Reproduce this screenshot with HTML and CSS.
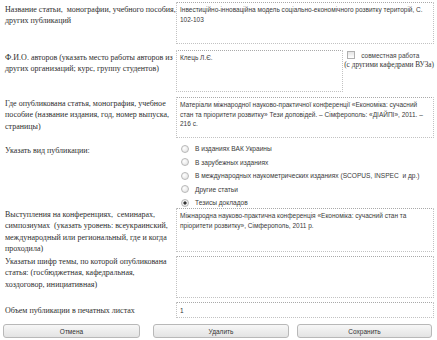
FILE: index.html
```html
<!DOCTYPE html>
<html lang="ru">
<head>
<meta charset="utf-8">
<title>Публикация</title>
<link rel="stylesheet" href="styles.css">
</head>
<body>
<form class="form">
  <div class="row r1">
    <div class="label">Название статьи,&nbsp; монографии, учебного пособия, других публикаций</div>
    <div class="control"><textarea class="ta h42">Інвестиційно-інноваційна модель соціально-економічного розвитку територій, С. 102-103</textarea></div>
  </div>
  <div class="row r2">
    <div class="label">Ф.И.О. авторов (указать место работы авторов из других организаций; курс, группу студентов)</div>
    <div class="control split">
      <textarea class="ta narrow h42">Клець Л.Є.</textarea>
      <div class="joint">
        <label class="joint-top"><input type="checkbox" class="cb"><span class="joint-text">совместная работа</span></label>
        <div class="joint-note">(с другими кафедрами ВУЗа)</div>
      </div>
    </div>
  </div>
  <div class="row r3">
    <div class="label">Где опубликована статья, монография, учебное пособие (название издания, год, номер выпуска, страницы)</div>
    <div class="control"><textarea class="ta h41">Матеріали міжнародної науково-практичної конференції «Економіка: сучасний стан та пріоритети розвитку» Тези доповідей. – Сімферополь: «ДІАЙПІ», 2011. – 216 с.</textarea></div>
  </div>
  <div class="row r4">
    <div class="label">Указать вид публикации:</div>
    <div class="control radios">
      <label class="opt"><input type="radio" name="kind" class="rb"><span>В изданиях ВАК Украины</span></label>
      <label class="opt"><input type="radio" name="kind" class="rb"><span>В зарубежных изданиях</span></label>
      <label class="opt"><input type="radio" name="kind" class="rb"><span>В международных наукометрических изданиях (SCOPUS, INSPEC&nbsp; и др.)</span></label>
      <label class="opt"><input type="radio" name="kind" class="rb"><span>Другие статьи</span></label>
      <label class="opt"><input type="radio" name="kind" class="rb" checked><span>Тезисы докладов</span></label>
    </div>
  </div>
  <div class="row r5">
    <div class="label">Выступления на конференциях,&nbsp; семинарах, симпозиумах&nbsp; (указать уровень: всеукраинский, международный или региональный, где и когда проходила)</div>
    <div class="control"><textarea class="ta h44">Міжнародна науково-практична конференція «Економіка: сучасний стан та пріоритети розвитку», Сімферополь, 2011 р.</textarea></div>
  </div>
  <div class="row r6">
    <div class="label">Указатьи шифр темы, по которой опубликована статья: (госбюджетная, кафедральная, хоздоговор, инициативная)</div>
    <div class="control"><textarea class="ta h42"></textarea></div>
  </div>
  <div class="row r7">
    <div class="label mid">Объем публикации в печатных листах</div>
    <div class="control"><input type="text" class="inp" value="1"></div>
  </div>
  <div class="buttons">
    <button type="button" class="btn b-cancel">Отмена</button>
    <button type="button" class="btn b-del">Удалить</button>
    <button type="button" class="btn b-save">Сохранить</button>
  </div>
</form>
</body>
</html>
```

FILE: styles.css
```css
html, body {
  margin: 0;
  padding: 0;
  background: #ffffff;
}
body {
  font-family: "Liberation Serif", "Times New Roman", serif;
  font-size: 8px;
  color: #222;
}
.form {
  width: 437px;
  padding: 2px 0 0 5px;
  box-sizing: border-box;
}
.row {
  display: grid;
  grid-template-columns: 171px 258px;
  align-items: start;
}
.label {
  padding-top: 2px;
  margin-bottom: -12px;
  line-height: 11.4px;
  color: #2e2e2e;
}
.r3 .label { padding-top: 1px; }
.r5 .label { padding-top: 1px; }
.r6 .label { padding-top: 0; }
.label.mid {
  padding-top: 3px;
  margin-bottom: 0;
}
.r2 { margin-top: 6px; }
.r3 { margin-top: 5px; }
.r4 { margin-top: 5px; }
.r5 { margin-top: 1px; }
.r6 { margin-top: 4px; }
.r7 { margin-top: 4px; }

.ta {
  display: block;
  width: 258px;
  box-sizing: border-box;
  margin: 0;
  padding: 2px 2px 2px 3px;
  border: 1px dotted #c2c2c2;
  border-top-color: #a9a9a9;
  font-family: "Liberation Sans", Arial, sans-serif;
  font-size: 6.5px;
  line-height: 9.6px;
  color: #3a3a3a;
  resize: none;
  overflow: hidden;
  background: #fff;
}
.h41 { height: 41px; }
.h42 { height: 42px; }
.h44 { height: 44px; }
.ta.narrow { width: 169px; }

.split {
  display: flex;
  gap: 4px;
}
.joint {
  padding-top: 1px;
}
.joint-top {
  display: flex;
  align-items: center;
  gap: 6px;
}
.cb {
  appearance: none;
  -webkit-appearance: none;
  margin: 0;
  width: 8px;
  height: 8px;
  border: 1px solid #b0b0b0;
  background: linear-gradient(#e4e4e4, #ffffff);
  box-sizing: border-box;
  flex: none;
}
.joint-text {
  font-family: "Liberation Sans", Arial, sans-serif;
  font-size: 6.5px;
  color: #444;
}
.joint-note {
  margin-top: 1px;
  margin-left: -3px;
  font-size: 7.3px;
  color: #333;
  white-space: nowrap;
}

.radios {
  display: flex;
  flex-direction: column;
  gap: 4.5px;
  padding: 1px 0 0 5px;
}
.opt {
  display: flex;
  align-items: center;
  gap: 6px;
  height: 9px;
  line-height: 9px;
  white-space: nowrap;
  font-family: "Liberation Sans", Arial, sans-serif;
  font-size: 6.6px;
  color: #3a3a3a;
}
.rb {
  appearance: none;
  -webkit-appearance: none;
  margin: 0;
  width: 8px;
  height: 8px;
  border-radius: 50%;
  border: 1px solid #b8b8b8;
  background: radial-gradient(circle at 35% 35%, #ffffff, #dedede);
  box-sizing: border-box;
  flex: none;
}
.rb:checked {
  background: radial-gradient(circle, #333 0, #333 1.3px, #f4f4f4 1.9px, #e4e4e4 100%);
}

.inp {
  display: block;
  width: 258px;
  height: 16px;
  box-sizing: border-box;
  margin: 0;
  padding: 0 3px;
  border: 1px dotted #c2c2c2;
  border-top-color: #a9a9a9;
  font-family: "Liberation Sans", Arial, sans-serif;
  font-size: 6.5px;
  color: #333;
  background: #fff;
}

.buttons {
  display: flex;
  margin-top: 6px;
  margin-left: -2px;
}
.btn {
  height: 14px;
  box-sizing: border-box;
  margin: 0;
  padding: 0;
  border: 1px solid #b8b8b8;
  border-radius: 3px;
  background: linear-gradient(#f7f7f7, #e3e3e3);
  font-family: "Liberation Sans", Arial, sans-serif;
  font-size: 6.5px;
  color: #333;
  cursor: pointer;
}
.b-cancel { width: 137px; }
.b-del { width: 136px; margin-left: 13px; }
.b-save { width: 135px; margin-left: 8px; }
```
